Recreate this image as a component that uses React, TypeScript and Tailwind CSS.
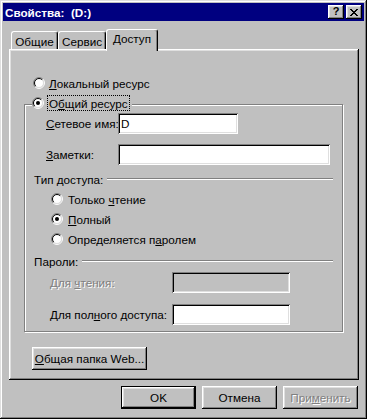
import React from 'react';

const raised =
  'shadow-[inset_-1px_-1px_0_#000,inset_1px_1px_0_#fff,inset_-2px_-2px_0_#808080,inset_2px_2px_0_#dfdfdf]';
const sunken =
  'shadow-[inset_1px_1px_0_#808080,inset_-1px_-1px_0_#fff,inset_2px_2px_0_#000,inset_-2px_-2px_0_#dfdfdf]';
const disabledText = 'text-[#808080] [text-shadow:1px_1px_0_#fff]';

const Radio = ({ checked }: { checked?: boolean }) => (
  <svg width="12" height="12" viewBox="0 0 12 12" className="shrink-0">
    <circle cx="6" cy="6" r="4.5" fill="#fff" />
    <path d="M2.111 9.889 A5.5 5.5 0 0 1 9.889 2.111" fill="none" stroke="#808080" strokeWidth="1" />
    <path d="M9.889 2.111 A5.5 5.5 0 0 1 2.111 9.889" fill="none" stroke="#fff" strokeWidth="1" />
    <path d="M2.818 9.182 A4.5 4.5 0 0 1 9.182 2.818" fill="none" stroke="#000" strokeWidth="1" />
    <path d="M9.182 2.818 A4.5 4.5 0 0 1 2.818 9.182" fill="none" stroke="#dfdfdf" strokeWidth="1" />
    {checked && <circle cx="6" cy="6" r="2" fill="#000" />}
  </svg>
);

const RadioRow = ({ checked, children }: { checked?: boolean; children: React.ReactNode }) => (
  <div className="h-[20px] pl-[26px] flex items-center gap-[5px]">
    <Radio checked={checked} />
    <span className="whitespace-nowrap">{children}</span>
  </div>
);

const Etched = () => <div className="flex-1 h-[2px] border-t border-t-[#808080] border-b border-b-white" />;

const SectionLabel = ({ label }: { label: string }) => (
  <div className="h-[14px] pl-[9px] pr-[9px] flex items-center gap-[4px]">
    <span className="whitespace-nowrap">{label}</span>
    <Etched />
  </div>
);

const Button = ({
  children,
  isDefault,
  className = '',
}: {
  children: React.ReactNode;
  isDefault?: boolean;
  className?: string;
}) => (
  <div
    className={`h-[23px] flex items-center justify-center whitespace-nowrap bg-[#c0c0c0] ${
      isDefault ? 'border border-black' : ''
    } ${raised} ${className}`}
  >
    {children}
  </div>
);

const Tab = ({ label, selected, className = '' }: { label: string; selected?: boolean; className?: string }) => (
  <div
    className={`flex justify-center bg-[#c0c0c0] border-l border-t border-white border-r border-r-black rounded-t-[3px] shadow-[inset_-1px_0_0_#808080] ${
      selected ? 'h-[22px] -mb-[2px] relative z-10 items-start pt-[2px]' : 'h-[18px] items-start pt-[3px]'
    } ${className}`}
  >
    {label}
  </div>
);

export default function App() {
  return (
    <div
      className={`w-[367px] h-[419px] bg-[#c0c0c0] p-[3px] flex flex-col text-[11.7px] leading-[13px] text-black font-['Liberation_Sans',Arial,sans-serif] shadow-[inset_-1px_-1px_0_#000,inset_1px_1px_0_#dfdfdf,inset_-2px_-2px_0_#808080,inset_2px_2px_0_#fff]`}
    >
      {/* title bar */}
      <div className="h-[18px] bg-[#000080] flex items-center justify-between pl-[2px] pr-[2px]">
        <span className="text-white font-bold whitespace-pre">Свойства:  (D:)</span>
        <div className="flex gap-[2px]">
          <div className={`w-[16px] h-[14px] bg-[#c0c0c0] flex items-center justify-center font-bold text-[11px] ${raised}`}>
            <span className="-mt-[1px]">?</span>
          </div>
          <div className={`w-[16px] h-[14px] bg-[#c0c0c0] flex items-center justify-center ${raised}`}>
            <svg width="8" height="7" viewBox="0 0 8 7" shapeRendering="crispEdges">
              <path d="M0 0h2v1h-2zM6 0h2v1h-2zM1 1h2v1h-2zM5 1h2v1h-2zM2 2h4v1h-4zM3 3h2v1h-2zM2 4h4v1h-4zM1 5h2v1h-2zM5 5h2v1h-2zM0 6h2v1h-2zM6 6h2v1h-2z" fill="#000" />
            </svg>
          </div>
        </div>
      </div>

      {/* tabs */}
      <div className="mt-[8px] ml-[8px] h-[20px] flex items-end">
        <Tab label="Общие" className="w-[47px]" />
        <Tab label="Сервис" className="w-[48px]" />
        <Tab label="Доступ" selected className="w-[52px]" />
      </div>

      {/* tab page */}
      <div className={`ml-[6px] w-[350px] h-[331px] p-[2px] ${raised}`}>
        <div className="mt-[24px] h-[16px] pl-[22px] flex items-center gap-[4px]">
          <Radio />
          <span className="whitespace-nowrap">
            <u>Л</u>окальный ресурс
          </span>
        </div>

        <div className="relative mt-[13px] ml-[13px] w-[319px] h-[228px] border border-[#808080] shadow-[inset_1px_1px_0_#fff,1px_1px_0_#fff]">
          <div className="absolute left-[7px] top-[-10px] h-[16px] bg-[#c0c0c0] pr-[2px] flex items-center gap-[3px]">
            <Radio checked />
            <span className="h-[16px] px-[1px] flex items-center whitespace-nowrap border border-dotted border-black">
              О<u>б</u>щий ресурс
            </span>
          </div>

          <div className="mt-[8px] h-[21px] pl-[21px] flex items-center">
            <span className="w-[72px] shrink-0 whitespace-nowrap">
              <u>С</u>етевое имя:
            </span>
            <div className={`w-[120px] h-[21px] bg-white pl-[3px] flex items-center ${sunken}`}>D</div>
          </div>

          <div className="mt-[10px] h-[21px] pl-[21px] flex items-center">
            <span className="w-[72px] shrink-0 whitespace-nowrap">
              <u>З</u>аметки:
            </span>
            <div className={`w-[212px] h-[21px] bg-white ${sunken}`} />
          </div>

          <div className="mt-[7px]">
            <SectionLabel label="Тип доступа:" />
          </div>
          <div className="mt-[3px]">
            <RadioRow>
              Только <u>ч</u>тение
            </RadioRow>
            <RadioRow checked>
              <u>П</u>олный
            </RadioRow>
            <RadioRow>
              Определяется п<u>а</u>ролем
            </RadioRow>
          </div>

          <div className="mt-[5px]">
            <SectionLabel label="Пароли:" />
          </div>

          <div className="mt-[4px] h-[21px] pl-[25px] flex items-center">
            <span className={`w-[122px] shrink-0 whitespace-nowrap ${disabledText}`}>
              Для <u>ч</u>тения:
            </span>
            <div className={`w-[118px] h-[21px] bg-[#c0c0c0] ${sunken}`} />
          </div>

          <div className="mt-[11px] h-[21px] pl-[25px] flex items-center">
            <span className="w-[122px] shrink-0 whitespace-nowrap">
              Для пол<u>н</u>ого доступа:
            </span>
            <div className={`w-[118px] h-[21px] bg-white ${sunken}`} />
          </div>
        </div>

        <Button className="mt-[15px] ml-[21px] w-[115px]">
          <span>
            <u>О</u>бщая папка Web...
          </span>
        </Button>
      </div>

      {/* dialog buttons */}
      <div className="mt-[6px] pr-[6px] flex justify-end gap-[6px]">
        <Button isDefault className="w-[75px]">
          OK
        </Button>
        <Button className="w-[75px]">Отмена</Button>
        <Button className="w-[75px]">
          <span className={disabledText}>
            При<u>м</u>енить
          </span>
        </Button>
      </div>
    </div>
  );
}
